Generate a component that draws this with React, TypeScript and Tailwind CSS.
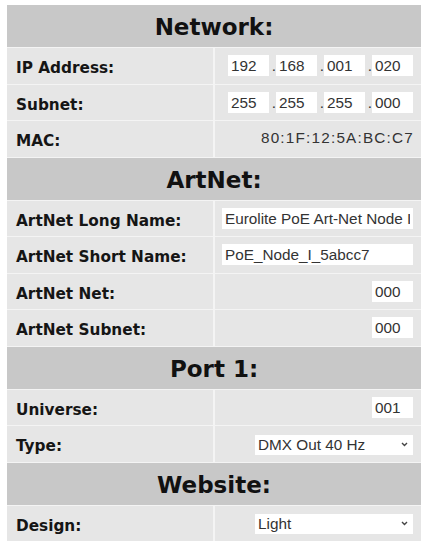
import React from "react";

const labelFont = { fontFamily: '"DejaVu Sans", Verdana, sans-serif' };

function Header({ title }: { title: string }) {
  return (
    <div
      className="h-[42px] bg-[#c8c8c8] flex items-center justify-center pt-[3px] text-[23px] font-bold text-[#111] leading-none"
      style={labelFont}
    >
      {title}
    </div>
  );
}

function Row({ label, children }: { label: string; children: React.ReactNode }) {
  return (
    <div className="h-[35.5px] grid grid-cols-[206px_206px] gap-x-[2px]">
      <div
        className="bg-[#e6e6e6] flex items-center pl-[9px] pt-[6px] text-[15.3px] font-bold text-[#151515] leading-none"
        style={labelFont}
      >
        {label}
      </div>
      <div className="bg-[#e6e6e6] flex items-center justify-end pr-[8px] font-['Liberation_Sans'] text-[15.3px] text-[#333]">
        {children}
      </div>
    </div>
  );
}

function Box({ value, w = "w-[41px]" }: { value: string; w?: string }) {
  return (
    <input
      readOnly
      value={value}
      className={`${w} h-[21px] leading-[21px] bg-white border-0 outline-none px-[3px] font-['Liberation_Sans'] text-[15.3px] text-[#333]`}
    />
  );
}

function Dot() {
  return <span className="w-[7px] text-right leading-[21px]">.</span>;
}

function Quad({ parts }: { parts: string[] }) {
  return (
    <div className="flex items-center">
      <Box value={parts[0]} />
      <Dot />
      <Box value={parts[1]} />
      <Dot />
      <Box value={parts[2]} />
      <Dot />
      <Box value={parts[3]} />
    </div>
  );
}

function Select({ value }: { value: string }) {
  return (
    <div className="relative w-[158px] h-[20px]">
      <select
        defaultValue={value}
        className="appearance-none w-full h-full bg-white border-0 outline-none pl-[3px] font-['Liberation_Sans'] text-[15.3px] text-[#333] leading-[20px]"
      >
        <option>{value}</option>
      </select>
      <svg
        className="absolute right-[5px] top-[8px] pointer-events-none"
        width="7"
        height="5"
        viewBox="0 0 7 5"
      >
        <path d="M1 1 L3.5 3.5 L6 1" stroke="#444" strokeWidth="1.4" fill="none" />
      </svg>
    </div>
  );
}

export default function App() {
  return (
    <div className="w-[433px] h-[550px] bg-white pt-[5px] pl-[7px]">
      <div className="w-[414px] flex flex-col gap-y-[1px] bg-[#f4f4f4]">
        <Header title="Network:" />
        <Row label="IP Address:">
          <Quad parts={["192", "168", "001", "020"]} />
        </Row>
        <Row label="Subnet:">
          <Quad parts={["255", "255", "255", "000"]} />
        </Row>
        <Row label="MAC:">
          <span className="tracking-[1.2px] mr-[-1px]">80:1F:12:5A:BC:C7</span>
        </Row>
        <Header title="ArtNet:" />
        <Row label="ArtNet Long Name:">
          <Box value="Eurolite PoE Art-Net Node I" w="w-[191px]" />
        </Row>
        <Row label="ArtNet Short Name:">
          <Box value="PoE_Node_I_5abcc7" w="w-[191px]" />
        </Row>
        <Row label="ArtNet Net:">
          <Box value="000" />
        </Row>
        <Row label="ArtNet Subnet:">
          <Box value="000" />
        </Row>
        <Header title="Port 1:" />
        <Row label="Universe:">
          <Box value="001" />
        </Row>
        <Row label="Type:">
          <Select value="DMX Out 40 Hz" />
        </Row>
        <Header title="Website:" />
        <Row label="Design:">
          <Select value="Light" />
        </Row>
      </div>
    </div>
  );
}
